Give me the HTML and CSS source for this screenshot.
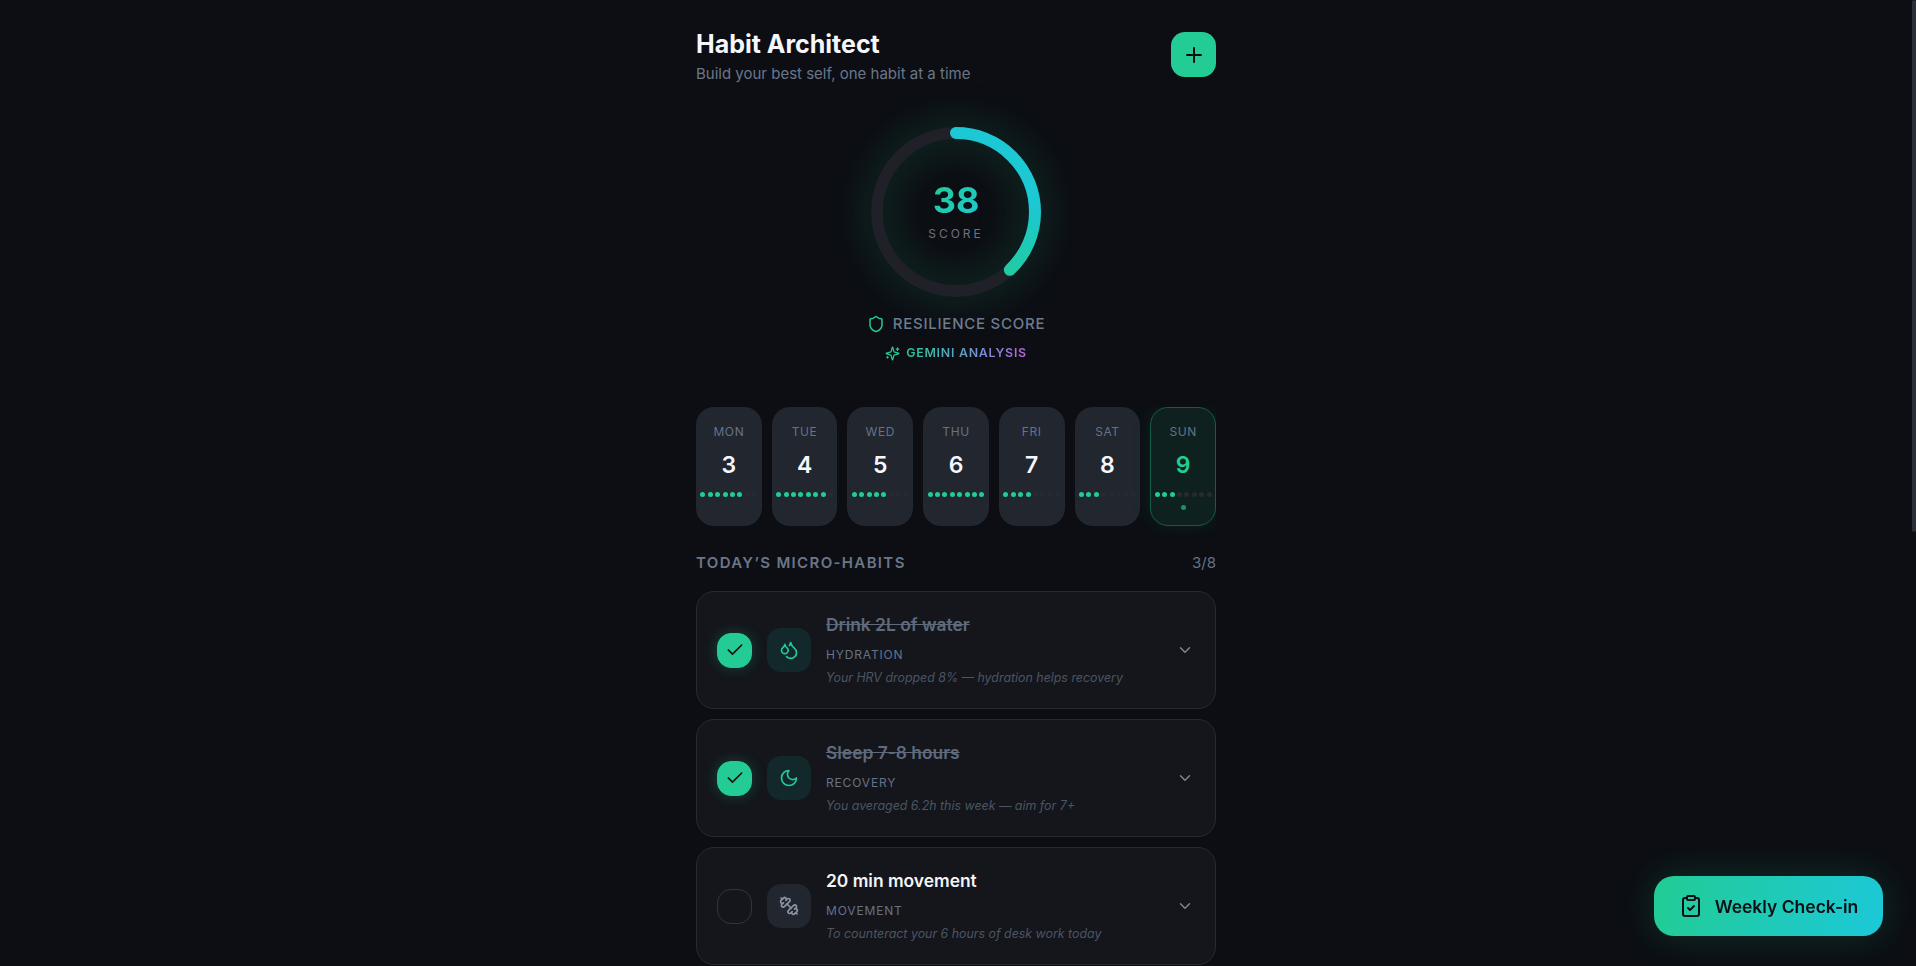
FILE: index.html
```html
<!DOCTYPE html>
<html lang="en">
<head>
<meta charset="utf-8">
<title>Habit Architect</title>
<link rel="stylesheet" href="styles.css">
</head>
<body>
<svg class="sprite" width="0" height="0" aria-hidden="true">
  <defs>
    <symbol id="i-plus" viewBox="0 0 24 24"><path d="M5 12h14"/><path d="M12 5v14"/></symbol>
    <symbol id="i-shield" viewBox="0 0 24 24"><path d="M20 13c0 5-3.5 7.5-7.66 8.95a1 1 0 0 1-.67-.01C7.5 20.5 4 18 4 13V6a1 1 0 0 1 1-1c2 0 4.5-1.2 6.24-2.72a1.17 1.17 0 0 1 1.52 0C14.51 3.81 17 5 19 5a1 1 0 0 1 1 1z"/></symbol>
    <symbol id="i-sparkles" viewBox="0 0 24 24"><path d="M9.937 15.5A2 2 0 0 0 8.5 14.063l-6.135-1.582a.5.5 0 0 1 0-.962L8.5 9.936A2 2 0 0 0 9.937 8.5l1.582-6.135a.5.5 0 0 1 .963 0L14.063 8.5A2 2 0 0 0 15.5 9.937l6.135 1.581a.5.5 0 0 1 0 .964L15.5 14.063a2 2 0 0 0-1.437 1.437l-1.582 6.135a.5.5 0 0 1-.963 0z"/><path d="M20 3v4"/><path d="M22 5h-4"/><path d="M4 17v2"/><path d="M5 18H3"/></symbol>
    <symbol id="i-check" viewBox="0 0 24 24"><path d="M20 6 9 17l-5-5"/></symbol>
    <symbol id="i-chevron" viewBox="0 0 24 24"><path d="m6 9 6 6 6-6"/></symbol>
    <symbol id="i-droplets" viewBox="0 0 24 24"><path d="M7 16.3c2.2 0 4-1.83 4-4.05 0-1.16-.57-2.26-1.71-3.19S7.29 6.75 7 5.3c-.29 1.45-1.14 2.84-2.29 3.76S3 11.1 3 12.25c0 2.22 1.8 4.05 4 4.05z"/><path d="M12.56 6.6A10.97 10.97 0 0 0 14 3.02c.5 2.5 2 4.9 4 6.5s3 3.5 3 5.5a6.98 6.98 0 0 1-11.91 4.97"/></symbol>
    <symbol id="i-moon" viewBox="0 0 24 24"><path d="M12 3a6 6 0 0 0 9 9 9 9 0 1 1-9-9Z"/></symbol>
    <symbol id="i-dumbbell" viewBox="0 0 24 24"><path d="M14.4 14.4 9.6 9.6"/><path d="M18.657 21.485a2 2 0 1 1-2.829-2.828l-1.767 1.768a2 2 0 1 1-2.829-2.829l6.364-6.364a2 2 0 1 1 2.829 2.829l-1.768 1.767a2 2 0 1 1 2.828 2.829z"/><path d="m21.5 21.5-1.4-1.4"/><path d="M3.9 3.9 2.5 2.5"/><path d="M6.404 12.768a2 2 0 1 1-2.829-2.829l1.768-1.767a2 2 0 1 1-2.828-2.829l2.828-2.828a2 2 0 1 1 2.829 2.828l1.767-1.768a2 2 0 1 1 2.829 2.829z"/></symbol>
    <symbol id="i-clipboard" viewBox="0 0 24 24"><rect x="8" y="2" width="8" height="4" rx="1"/><path d="M16 4h2a2 2 0 0 1 2 2v14a2 2 0 0 1-2 2H6a2 2 0 0 1-2-2V6a2 2 0 0 1 2-2h2"/><path d="m9 14 2 2 4-4"/></symbol>
  </defs>
</svg>

<div class="scroller">
<main class="app">
  <header class="top">
    <div>
      <h1 class="title">Habit Architect</h1>
      <p class="subtitle">Build your best self, one habit at a time</p>
    </div>
    <button class="add" type="button" aria-label="Add habit"><svg class="ico ico-24"><use href="#i-plus"/></svg></button>
  </header>

  <section class="score">
    <div class="ring">
      <svg class="ring-svg" width="180" height="180" viewBox="0 0 180 180">
        <defs>
          <linearGradient id="ringGrad" x1="0" y1="0" x2="1" y2="0">
            <stop offset="0" stop-color="#22cc94"/>
            <stop offset="0.55" stop-color="#1cc8d4"/>
            <stop offset="1" stop-color="#1cc8d4"/>
          </linearGradient>
        </defs>
        <g transform="rotate(-90 90 90)">
          <circle class="ring-track" cx="90" cy="90" r="79"/>
          <circle class="ring-arc" cx="90" cy="90" r="79" stroke="url(#ringGrad)" stroke-dasharray="188.6 496.4"/>
        </g>
      </svg>
      <div class="ring-label">
        <span class="ring-num">38</span>
        <span class="ring-cap">SCORE</span>
      </div>
    </div>
    <div class="resilience"><svg class="ico ico-18 green"><use href="#i-shield"/></svg><span>RESILIENCE SCORE</span></div>
    <div class="gemini"><svg class="ico ico-15 green"><use href="#i-sparkles"/></svg><span class="gemini-text">GEMINI ANALYSIS</span></div>
  </section>

  <div class="days">
    <div class="day"><span class="day-name">MON</span><span class="day-num">3</span><div class="dots"><i class="on"></i><i class="on"></i><i class="on"></i><i class="on"></i><i class="on"></i><i class="on"></i><i></i><i></i></div></div>
    <div class="day"><span class="day-name">TUE</span><span class="day-num">4</span><div class="dots"><i class="on"></i><i class="on"></i><i class="on"></i><i class="on"></i><i class="on"></i><i class="on"></i><i class="on"></i><i></i></div></div>
    <div class="day"><span class="day-name">WED</span><span class="day-num">5</span><div class="dots"><i class="on"></i><i class="on"></i><i class="on"></i><i class="on"></i><i class="on"></i><i></i><i></i><i></i></div></div>
    <div class="day"><span class="day-name">THU</span><span class="day-num">6</span><div class="dots"><i class="on"></i><i class="on"></i><i class="on"></i><i class="on"></i><i class="on"></i><i class="on"></i><i class="on"></i><i class="on"></i></div></div>
    <div class="day"><span class="day-name">FRI</span><span class="day-num">7</span><div class="dots"><i class="on"></i><i class="on"></i><i class="on"></i><i class="on"></i><i></i><i></i><i></i><i></i></div></div>
    <div class="day"><span class="day-name">SAT</span><span class="day-num">8</span><div class="dots"><i class="on"></i><i class="on"></i><i class="on"></i><i></i><i></i><i></i><i></i><i></i></div></div>
    <div class="day today"><span class="day-name">SUN</span><span class="day-num">9</span><div class="dots"><i class="on"></i><i class="on"></i><i class="on"></i><i></i><i></i><i></i><i></i><i></i><i class="mark"></i></div></div>
  </div>

  <div class="section-head">
    <h2 class="section-title">TODAY’S MICRO-HABITS</h2>
    <span class="section-count">3/8</span>
  </div>

  <ul class="habits">
    <li class="habit done">
      <span class="check"><svg class="ico ico-20"><use href="#i-check"/></svg></span>
      <span class="hab-icon"><svg class="ico ico-20"><use href="#i-droplets"/></svg></span>
      <div class="hab-text"><div class="hab-name">Drink 2L of water</div><div class="hab-cat">HYDRATION</div><div class="hab-note">Your HRV dropped 8% — hydration helps recovery</div></div>
      <svg class="ico ico-18 chev"><use href="#i-chevron"/></svg>
    </li>
    <li class="habit done">
      <span class="check"><svg class="ico ico-20"><use href="#i-check"/></svg></span>
      <span class="hab-icon"><svg class="ico ico-20"><use href="#i-moon"/></svg></span>
      <div class="hab-text"><div class="hab-name">Sleep 7-8 hours</div><div class="hab-cat">RECOVERY</div><div class="hab-note">You averaged 6.2h this week — aim for 7+</div></div>
      <svg class="ico ico-18 chev"><use href="#i-chevron"/></svg>
    </li>
    <li class="habit">
      <span class="check"></span>
      <span class="hab-icon"><svg class="ico ico-20"><use href="#i-dumbbell"/></svg></span>
      <div class="hab-text"><div class="hab-name">20 min movement</div><div class="hab-cat">MOVEMENT</div><div class="hab-note">To counteract your 6 hours of desk work today</div></div>
      <svg class="ico ico-18 chev"><use href="#i-chevron"/></svg>
    </li>
    <li class="habit done">
      <span class="check"><svg class="ico ico-20"><use href="#i-check"/></svg></span>
      <span class="hab-icon"><svg class="ico ico-20"><use href="#i-droplets"/></svg></span>
      <div class="hab-text"><div class="hab-name">Morning stretch</div><div class="hab-cat">MOBILITY</div><div class="hab-note">Five minutes loosens up your back</div></div>
      <svg class="ico ico-18 chev"><use href="#i-chevron"/></svg>
    </li>
    <li class="habit">
      <span class="check"></span>
      <span class="hab-icon"><svg class="ico ico-20"><use href="#i-moon"/></svg></span>
      <div class="hab-text"><div class="hab-name">Meditate 10 minutes</div><div class="hab-cat">MINDFULNESS</div><div class="hab-note">Lowers stress before your evening</div></div>
      <svg class="ico ico-18 chev"><use href="#i-chevron"/></svg>
    </li>
    <li class="habit">
      <span class="check"></span>
      <span class="hab-icon"><svg class="ico ico-20"><use href="#i-droplets"/></svg></span>
      <div class="hab-text"><div class="hab-name">Eat a protein breakfast</div><div class="hab-cat">NUTRITION</div><div class="hab-note">Keeps your energy steady until lunch</div></div>
      <svg class="ico ico-18 chev"><use href="#i-chevron"/></svg>
    </li>
    <li class="habit">
      <span class="check"></span>
      <span class="hab-icon"><svg class="ico ico-20"><use href="#i-dumbbell"/></svg></span>
      <div class="hab-text"><div class="hab-name">Walk after lunch</div><div class="hab-cat">MOVEMENT</div><div class="hab-note">A short walk helps your afternoon focus</div></div>
      <svg class="ico ico-18 chev"><use href="#i-chevron"/></svg>
    </li>
    <li class="habit">
      <span class="check"></span>
      <span class="hab-icon"><svg class="ico ico-20"><use href="#i-moon"/></svg></span>
      <div class="hab-text"><div class="hab-name">No screens before bed</div><div class="hab-cat">RECOVERY</div><div class="hab-note">Helps you fall asleep sooner</div></div>
      <svg class="ico ico-18 chev"><use href="#i-chevron"/></svg>
    </li>
  </ul>
</main>
</div>

<div class="scroll-thumb" aria-hidden="true"></div>

<button class="fab" type="button"><svg class="ico ico-24"><use href="#i-clipboard"/></svg><span>Weekly Check-in</span></button>
</body>
</html>
```

FILE: styles.css
```css
* { box-sizing: border-box; }
html, body { height: 100%; }
html { background: #0c0e13; }
body {
  margin: 0;
  overflow: hidden;
  font-family: Inter, "Liberation Sans", sans-serif;
  color: #f3f4f6;
  background: #0c0e13;
}
.scroller { height: 100vh; padding-right: 4px; overflow-y: scroll; scrollbar-width: none; }
.scroll-thumb { position: fixed; top: 0; right: 0; width: 4px; height: 532px; border-radius: 2px; background: #2a2f38; }
.sprite { position: absolute; }
.ico { display: block; fill: none; stroke: currentColor; stroke-width: 2; stroke-linecap: round; stroke-linejoin: round; flex: none; }
.ico-15 { width: 15px; height: 15px; }
.ico-18 { width: 18px; height: 18px; }
.ico-20 { width: 20px; height: 20px; }
.ico-24 { width: 24px; height: 24px; }
.green { color: #22cc94; }

.app { width: 520px; margin: 0 auto; padding: 28px 0 149px; }

.top { display: flex; justify-content: space-between; align-items: flex-start; }
.title { margin: 0; font-size: 25px; line-height: 32px; font-weight: 700; color: #f5f7fb; }
.subtitle { margin: 4px 0 0; font-size: 15px; line-height: 20px; color: #6b7688; }
.add {
  width: 45px; height: 45px; padding: 0; margin-top: 4px; border: 0; border-radius: 14px;
  background: #22cc94; color: #0b0d11;
  display: flex; align-items: center; justify-content: center;
}

.score { display: flex; flex-direction: column; align-items: center; margin-top: 38px; }
.ring { position: relative; width: 180px; height: 180px; }
.ring-svg { display: block; overflow: visible; filter: drop-shadow(0 0 20px rgba(34, 204, 148, 0.3)); }
.ring-track { fill: none; stroke: #1f2028; stroke-width: 12; }
.ring-arc { fill: none; stroke-width: 12; stroke-linecap: round; }
.ring-label { position: absolute; inset: 0; display: flex; flex-direction: column; align-items: center; justify-content: center; }
.ring-num { margin-top: -3px; font-size: 36px; line-height: 40px; font-weight: 700; background: linear-gradient(135deg, #22cc94, #1cc8d4); -webkit-background-clip: text; background-clip: text; color: transparent; }
.ring-cap { margin-top: 6px; font-size: 12px; line-height: 16px; letter-spacing: 0.25em; color: #6b7280; }
.resilience { display: flex; align-items: center; gap: 8px; margin-top: 12px; font-size: 15px; line-height: 20px; font-weight: 500; letter-spacing: 0.05em; color: #6f7b90; }
.gemini { display: flex; align-items: center; gap: 6px; margin-top: 11px; font-size: 12.4px; line-height: 16px; font-weight: 600; letter-spacing: 0.06em; }
.gemini-text { background: linear-gradient(90deg, #22cc94, #6f96d0 55%, #b565e0); -webkit-background-clip: text; background-clip: text; color: transparent; }

.days { display: grid; grid-template-columns: repeat(7, 1fr); gap: 10px; margin-top: 46px; padding-bottom: 9px; overflow: hidden; }
.day { display: flex; flex-direction: column; align-items: center; padding: 16px 3px 15px; border: 1px solid transparent; border-radius: 18px; background: #21262f; }
.day-name { font-size: 12px; line-height: 16px; letter-spacing: 0.05em; color: #667287; }
.day-num { margin-top: 11px; font-size: 23px; line-height: 28px; font-weight: 600; color: #f5f7fb; }
.dots { display: flex; flex-wrap: wrap; justify-content: center; gap: 8px 2.4px; margin-top: 13px; width: 100%; }
.dots i { width: 5px; height: 5px; border-radius: 50%; background: #272a32; }
.dots i.on { background: #22cc94; }
.dots i.mark { background: #17946d; }
.today { background: #0f211f; border-color: #135e48; box-shadow: 0 0 20px rgba(34, 204, 148, 0.1); }
.today .day-num { color: #22cc94; }

.section-head { display: flex; justify-content: space-between; align-items: center; margin-top: 17px; }
.section-title { margin: 0; font-size: 15px; line-height: 22px; font-weight: 600; letter-spacing: 0.09em; color: #6b7689; }
.section-count { font-size: 15px; line-height: 22px; color: #667287; }

.habits { list-style: none; margin: 17px 0 0; padding: 0; display: flex; flex-direction: column; gap: 10px; }
.habit { display: flex; align-items: center; gap: 15px; padding: 20px; border: 1px solid #262a33; border-radius: 18px; background: #14161c; }
.check { width: 35px; height: 35px; flex: none; border: 1px solid #2f3540; border-radius: 14px; display: flex; align-items: center; justify-content: center; color: #0b0d11; }
.done .check { border-color: #22cc94; background: #22cc94; box-shadow: 0 0 14px rgba(34, 204, 148, 0.25); }
.hab-icon { width: 44px; height: 44px; flex: none; border-radius: 14px; background: #21262f; color: #8b95a5; display: flex; align-items: center; justify-content: center; }
.done .hab-icon { background: #13282a; color: #22cc94; }
.hab-text { flex: 1; min-width: 0; }
.hab-name { font-size: 17.4px; line-height: 26px; font-weight: 600; color: #f3f4f6; }
.done .hab-name { color: #5f6a7d; text-decoration: line-through; }
.hab-cat { margin-top: 8px; font-size: 12px; line-height: 18px; letter-spacing: 0.07em; color: #667287; }
.hab-note { margin: 4px 0 0; font-size: 12.4px; line-height: 20px; font-style: italic; color: #4b5563; }
.chev { color: #7a8494; margin-right: 1px; }

.fab {
  position: fixed; right: 33px; bottom: 30px;
  width: 229px; height: 60px; padding: 0; border: 0; border-radius: 20px;
  background: linear-gradient(100deg, #22cc94, #1cc8d8);
  color: #0b1016; font-family: inherit; font-size: 17.5px; font-weight: 600;
  display: flex; align-items: center; justify-content: center; gap: 12px;
  box-shadow: 0 0 40px rgba(34, 204, 148, 0.18);
}
```
